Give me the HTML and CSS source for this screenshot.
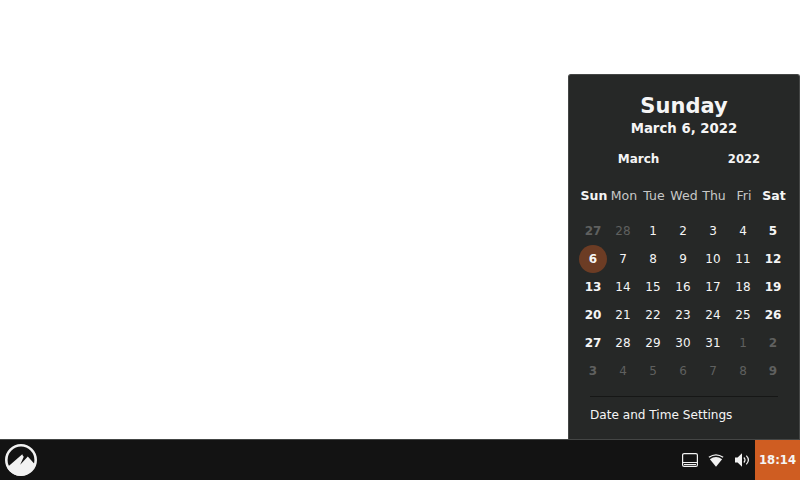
FILE: index.html
```html
<!DOCTYPE html>
<html lang="en">
<head>
<meta charset="utf-8">
<title>Desktop</title>
<link rel="stylesheet" href="styles.css">
</head>
<body>
<main class="desktop">
  <section class="calendar">
    <h1 class="weekday">Sunday</h1>
    <div class="date">March 6, 2022</div>
    <div class="period"><span class="month">March</span><span class="year">2022</span></div>
    <div class="names"><b>Sun</b><span>Mon</span><span>Tue</span><span>Wed</span><span>Thu</span><span>Fri</span><b>Sat</b></div>
    <div class="days">
      <b class="other">27</b><span class="other">28</span><span>1</span><span>2</span><span>3</span><span>4</span><b>5</b>
      <b class="today">6</b><span>7</span><span>8</span><span>9</span><span>10</span><span>11</span><b>12</b>
      <b>13</b><span>14</span><span>15</span><span>16</span><span>17</span><span>18</span><b>19</b>
      <b>20</b><span>21</span><span>22</span><span>23</span><span>24</span><span>25</span><b>26</b>
      <b>27</b><span>28</span><span>29</span><span>30</span><span>31</span><span class="other">1</span><b class="other">2</b>
      <b class="other">3</b><span class="other">4</span><span class="other">5</span><span class="other">6</span><span class="other">7</span><span class="other">8</span><b class="other">9</b>
    </div>
    <div class="settings">Date and Time Settings</div>
  </section>
</main>
<footer class="taskbar">
  <svg class="logo" width="32" height="32" viewBox="0 0 32 32">
    <circle cx="16" cy="16" r="14.7" fill="none" stroke="#f2f2f2" stroke-width="2.6"/>
    <path d="M2 23.500L17.300 10.200l.9 2.400.8-.4-3.800 8.600 7.600-8.200L30 20.500A15 15 0 0 1 2 23.500z" fill="#f2f2f2"/>
  </svg>
  <div class="tray">
    <svg width="16" height="16" viewBox="0 0 16 16">
      <rect x=".6" y="1.600" width="14.800" height="12.800" rx="1.500" fill="none" stroke="#f2f2f2" stroke-width="1.200"/>
      <path d="M1 10.500h14M2 12.500h12" stroke="#f2f2f2"/>
    </svg>
    <svg width="16" height="16" viewBox="0 0 16 16">
      <path d="M.9 5.300Q8 .4 15.100 5.300" fill="none" stroke="#f2f2f2" stroke-width="1.300"/>
      <path d="M1.900 7.200Q8 2.600 14.100 7.200L8 14.800z" fill="#f2f2f2"/>
    </svg>
    <svg width="16" height="16" viewBox="0 0 16 16">
      <path d="M1 5.500h2.600L8 1.300v13.400L3.600 10.500H1z" fill="#f2f2f2"/>
      <path d="M9.800 5.500q2.400 2.500 0 5M12.300 3.700q4.200 4.300 0 8.600" fill="none" stroke="#f2f2f2" stroke-width="1.200"/>
    </svg>
  </div>
  <div class="clock">18:14</div>
</footer>
</body>
</html>
```
FILE: styles.css
```css
* { box-sizing: border-box; }
body {
  margin: 0;
  width: 800px;
  height: 480px;
  display: flex;
  flex-direction: column;
  background: #fff;
  color: #f5f5f5;
  font: 12px/16px "DejaVu Sans", sans-serif;
  overflow: hidden;
}
.desktop {
  flex: 1;
  display: flex;
  justify-content: flex-end;
  align-items: flex-end;
}
.calendar {
  width: 232px;
  height: 365px;
  padding: 17px 9px 0;
  border: 1px solid #444645;
  border-bottom: 0;
  border-radius: 3px 3px 0 0;
  background: #262827;
}
.weekday {
  margin: 0;
  font-size: 21px;
  line-height: 28px;
  text-align: center;
}
.date {
  margin-top: 1px;
  font-size: 13.3px;
  font-weight: bold;
  text-align: center;
}
.period {
  display: flex;
  margin-top: 14px;
  font-weight: bold;
}
.month { width: 121px; text-align: center; }
.year { width: 90px; text-align: center; font-size: 11.6px; }
.names, .days {
  display: grid;
  grid-template-columns: repeat(7, 30px);
  justify-items: center;
}
.names {
  margin: 21px -1px 0 1px;
  font-size: 12.5px;
  color: #c8c8c8;
}
.names b { color: #f5f5f5; }
.days {
  grid-auto-rows: 28px;
  margin-top: 13px;
  line-height: 28px;
}
.days .other { color: #5f605f; }
.today {
  width: 28px;
  border-radius: 50%;
  background: #6c3c24;
  text-align: center;
}
.settings {
  margin: 11px 12px 0;
  padding-top: 10px;
  border-top: 1px solid #161716;
  font-size: 12.1px;
}
.taskbar {
  height: 41px;
  display: flex;
  align-items: center;
  border-top: 1px solid #444645;
  background: #131313;
}
.logo { margin-left: 5px; }
.tray {
  display: flex;
  gap: 10px;
  margin-left: auto;
}
.clock {
  width: 45px;
  height: 40px;
  margin-left: 5px;
  background: #cf5d22;
  font-size: 11.7px;
  font-weight: bold;
  line-height: 40px;
  text-align: center;
}
```
